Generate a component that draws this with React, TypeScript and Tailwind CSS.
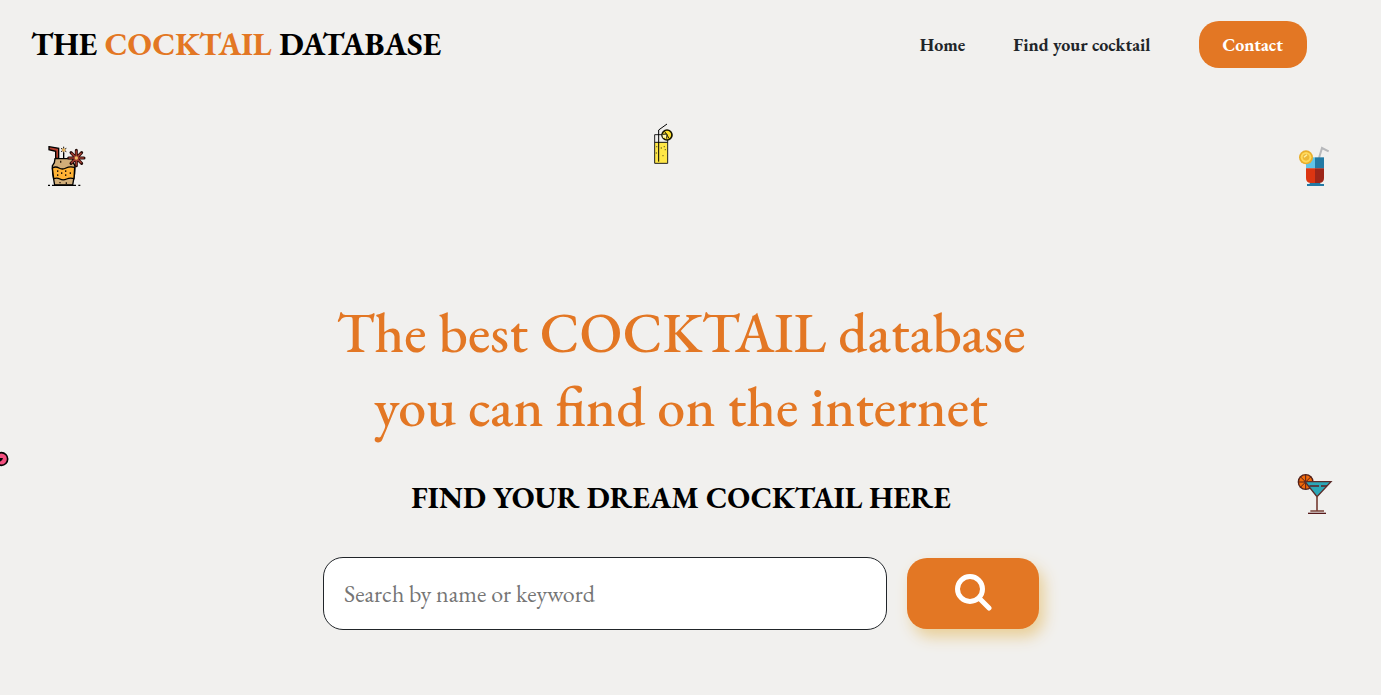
import type { ReactNode } from "react";

function Doodle({ className, children }: { className: string; children: ReactNode }) {
  return (
    <svg aria-hidden="true" viewBox="0 0 180 180" className={`pointer-events-none absolute size-[60px] ${className}`} fill="none">
      {children}
    </svg>
  );
}

function SpicedPunch() {
  return (
    <Doodle className="top-[134px] left-9">
      <path d="M39 38 68 43V73H59V52L39 47Z" fill="#b5402f" stroke="#000" strokeWidth="4" />
      <path d="M83 56V73" stroke="#000" strokeWidth="4" />
      <path d="M83 38V58M75 43 91 53M91 43 75 53" stroke="#1a1208" strokeWidth="3" />
      <circle cx="83" cy="48" r="5" fill="#e8b45c" />
      <path d="M57 74H110L112 86 117 96 116 118 110 153H56L50 118 49 96 55 86Z" fill="#d1ae79" stroke="#000" strokeWidth="4" />
      <path d="M49 102Q59 96 69 102T90 102T116 100L114 134Q103 130 92 135T72 135T53 134Z" fill="#ffb335" stroke="#000" strokeWidth="4" />
      <path d="M65 109v5M65 121v5M77 115v5M89 109v5M89 121v5M103 115v5M74 80v6M91 145v5M72 144v4" stroke="#2a1a0a" strokeWidth="4" />
      <g strokeLinecap="round">
        <path d="M121 49V95M98 72H144M105 56 137 88M137 56 105 88" stroke="#210b08" strokeWidth="9" />
        <path d="M121 51V93M100 72H142M107 58 135 86M135 58 107 86" stroke="#9c3a2d" strokeWidth="5" />
      </g>
      <circle cx="121" cy="72" r="5" fill="#f0bd67" />
      <path d="M36 154h6M48 154h72M127 154h6" stroke="#000" strokeWidth="4" />
    </Doodle>
  );
}

function Lemonade() {
  return (
    <Doodle className="top-[114px] left-[46%]">
      <path d="M59 85H98V148H59Z" fill="#ffe747" />
      <path d="M59 62H98V148H59Z" stroke="#202020" strokeWidth="3" />
      <path d="M59 85H98" stroke="#111" strokeWidth="3" />
      <path d="M71 143V48L96 30" stroke="#000" strokeWidth="3" />
      <circle cx="96" cy="63" r="15" fill="#ffe02b" stroke="#171500" strokeWidth="5" />
      <path d="M96 63 88 51M96 63 104 76" stroke="#29240a" strokeWidth="3" />
      <path d="M82 61 96 60 95 75 90 70 84 72Z" fill="#fff7b0" />
      <path d="M82 61 96 60 95 74" stroke="#171500" strokeWidth="3" />
      <path d="M65 96v4M79 100v4M88 96v4M91 105v4M64 115v4M84 123v4" stroke="#8a7d25" strokeWidth="4" />
    </Doodle>
  );
}

function RedCooler() {
  return (
    <Doodle className="top-[136px] right-9">
      <path d="M102 66 111 36 131 46" stroke="#b7b8bb" strokeWidth="6" />
      <path d="M63 64H90V97H63Z" fill="#5fc4e8" />
      <path d="M90 64H117V97H90Z" fill="#237aa5" />
      <path d="M63 97H90V141H76Q63 139 63 126Z" fill="#dc3511" />
      <path d="M90 97H117V126Q117 139 104 141H90Z" fill="#9d2619" />
      <path d="M75 141H105L107 144H117V150H66V144H73Z" fill="#237aa5" />
      <circle cx="63" cy="64" r="21" fill="#e9af2c" />
      <circle cx="63" cy="64" r="16" fill="#ffd95b" />
      <circle cx="63" cy="64" r="10" fill="#edb837" />
      <path d="M57 64 66 56" stroke="#fff0a3" strokeWidth="4" />
    </Doodle>
  );
}

function Martini() {
  return (
    <Doodle className="top-[464px] right-9">
      <circle cx="62" cy="54" r="22" fill="#f26a0a" stroke="#532018" strokeWidth="4" />
      <path d="M62 32V76M40 54H84M46 38 78 70M78 38 46 70" stroke="#532018" strokeWidth="3" />
      <path d="M60 53H138L96 98Z" fill="#2ba7b7" stroke="#5c2b28" strokeWidth="4" />
      <path d="M73 66H102M108 66H126" stroke="#5b2025" strokeWidth="4" />
      <path d="M96 97V140M76 141H117" stroke="#7a4238" strokeWidth="5" />
      <path d="M69 148H123" stroke="#571a1b" strokeWidth="4" />
    </Doodle>
  );
}

function PinkCherry() {
  return (
    <svg aria-hidden="true" viewBox="0 0 30 48" className="pointer-events-none absolute top-[451px] left-0 h-4 w-[10px]" fill="none">
      <circle cx="4" cy="24" r="19" fill="#f24f7e" stroke="#000" strokeWidth="5" />
      <path d="M0 21H9Q8 29 0 32Z" fill="#000" />
    </svg>
  );
}

export default function App() {
  return (
    <div className="relative min-h-screen overflow-hidden bg-[#f1f0ee] font-['EB_Garamond','Liberation_Serif',serif] text-black">
      <header className="flex items-start justify-between pt-[21px] pr-[74px] pl-[31px]">
        <a href="#home" className="text-[32px] leading-[46px] font-bold">
          THE <span className="text-[#e37724]">COCKTAIL</span> DATABASE
        </a>
        <nav className="flex items-center gap-12 text-lg font-bold text-[#212529]">
          <a href="#home">Home</a>
          <a href="#search">Find your cocktail</a>
          <a href="#contact" className="rounded-[20px] bg-[#e37724] px-6 py-[10px] leading-[27px] text-white">
            Contact
          </a>
        </nav>
      </header>

      <SpicedPunch />
      <Lemonade />
      <RedCooler />
      <Martini />
      <PinkCherry />

      <main className="flex flex-col items-center pt-[228px] pr-[19px] pb-16">
        <h1 className="text-center text-[56px] leading-[74px] font-medium text-[#e37724]">
          The best COCKTAIL database
          <br />
          you can find on the internet
        </h1>
        <h2 className="mt-[30px] text-[30px] leading-[48px] font-bold">FIND YOUR DREAM COCKTAIL HERE</h2>
        <form id="search" className="mt-[35px] flex items-center gap-5" onSubmit={(event) => event.preventDefault()}>
          <input
            type="search"
            aria-label="Search by name or keyword"
            placeholder="Search by name or keyword"
            className="h-[73px] w-[564px] rounded-[20px] border border-[#212529] bg-white px-5 text-2xl placeholder:text-[#757575]"
          />
          <button
            type="submit"
            aria-label="Search"
            className="flex h-[71px] w-[132px] items-center justify-center rounded-[20px] bg-[#e37724] pb-1 text-white shadow-[5px_8px_15px_#e9cf98]"
          >
            <svg aria-hidden="true" viewBox="0 0 38 38" className="size-[38px]" fill="none" stroke="currentColor">
              <circle cx="16" cy="16" r="12.5" strokeWidth="5" />
              <path d="m25 25 10 10" strokeWidth="5" strokeLinecap="round" />
            </svg>
          </button>
        </form>
      </main>
    </div>
  );
}
